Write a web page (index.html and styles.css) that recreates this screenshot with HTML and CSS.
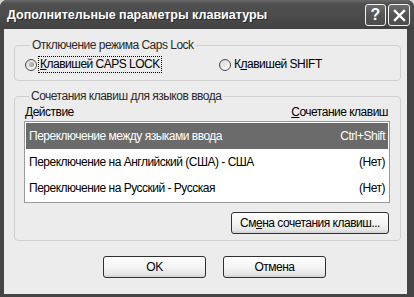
FILE: index.html
```html
<!DOCTYPE html>
<html lang="ru">
<head>
    <meta charset="UTF-8">
    <title>Дополнительные параметры клавиатуры</title>
    <link rel="stylesheet" href="styles.css">
</head>
<body>

    <div class="window">
        <div class="titlebar">
            <span class="title">Дополнительные параметры клавиатуры</span>
            <div class="title-buttons">
                <span class="title-btn help">?</span>
                <span class="title-btn close">
                    <svg width="13" height="13" viewBox="0 0 13 13">
                        <path d="M2 2 L11 11 M11 2 L2 11" stroke="#fff" stroke-width="2.4" stroke-linecap="square"/>
                    </svg>
                </span>
            </div>
        </div>

        <div class="client">
            <fieldset class="group caps-group">
                <legend>Отключение режима Caps Lock</legend>
                <div class="radio-row">
                    <label class="radio-item">
                        <span class="radio checked"></span>
                        <span class="radio-label focused"><u>К</u>лавишей CAPS LOCK</span>
                    </label>
                    <label class="radio-item">
                        <span class="radio"></span>
                        <span class="radio-label">К<u>л</u>авишей SHIFT</span>
                    </label>
                </div>
            </fieldset>

            <fieldset class="group keys-group">
                <legend>Сочетания клавиш для языков ввода</legend>
                <div class="list-header">
                    <span>Действие</span>
                    <span><u>С</u>очетание клавиш</span>
                </div>
                <div class="list">
                    <div class="list-row selected">
                        <span>Переключение между языками ввода</span>
                        <span>Ctrl+Shift</span>
                    </div>
                    <div class="list-row">
                        <span>Переключение на Английский (США) - США</span>
                        <span>(Нет)</span>
                    </div>
                    <div class="list-row">
                        <span>Переключение на Русский - Русская</span>
                        <span>(Нет)</span>
                    </div>
                </div>
                <div class="group-actions">
                    <button class="btn change-btn">См<u>е</u>на сочетания клавиш...</button>
                </div>
            </fieldset>

            <div class="dialog-actions">
                <button class="btn dialog-btn">OK</button>
                <button class="btn dialog-btn">Отмена</button>
            </div>
        </div>
    </div>

</body>
</html>
```

FILE: styles.css
```css
body {
    margin: 0;
    background-color: #d6d6d6;
    font-family: "Liberation Sans", Arial, sans-serif;
    font-size: 12px;
    letter-spacing: -0.5px;
    color: #000;
}
.window {
    width: 414px;
    height: 297px;
    display: flex;
    flex-direction: column;
    background-color: #454545;
    border-radius: 7px 7px 0 0;
    overflow: hidden;
}
.titlebar {
    height: 29px;
    display: flex;
    align-items: center;
    justify-content: space-between;
    padding: 0 4px 0 7px;
    background: linear-gradient(#6a6a6a, #505050 12%, #4a4a4a 60%, #424242);
}
.title {
    color: #fff;
    font-weight: bold;
    font-size: 12.5px;
    letter-spacing: 0;
    margin-top: 1px;
    text-shadow: 1px 1px 0 #2a2a2a;
}
.title-buttons {
    display: flex;
    gap: 2px;
    margin-top: 1px;
}
.title-btn {
    width: 19px;
    height: 20px;
    border: 1px solid #f2f2f2;
    border-radius: 3px;
    background: linear-gradient(#6c6c6c, #555 50%, #4c4c4c);
    display: flex;
    align-items: center;
    justify-content: center;
    color: #fff;
    font-weight: bold;
    font-size: 16px;
    letter-spacing: 0;
}
.title-btn.close {
    width: 20px;
}
.client {
    flex: 1;
    margin: 0 7px 3px 4px;
    padding-top: 9px;
    background-color: #ececec;
}
.group {
    margin: 0 6px 0 10px;
    border: 1px solid #d0d0d0;
    border-radius: 4px;
}
.group legend {
    padding: 0 2px;
    margin-left: 5px;
    line-height: 14px;
    color: #2a2a2a;
}
.caps-group {
    padding: 0 10px 7px 10px;
}
.radio-row {
    display: grid;
    grid-template-columns: 194px auto;
    margin-top: 4px;
    height: 17px;
    align-items: center;
}
.radio-item {
    display: flex;
    align-items: center;
    gap: 1px;
}
.radio {
    width: 10px;
    height: 10px;
    border: 1px solid #4a4a4a;
    border-radius: 50%;
    background: linear-gradient(135deg, #d4d4d4, #f4f4f4 70%, #fff);
    display: flex;
    align-items: center;
    justify-content: center;
}
.radio.checked::after {
    content: "";
    width: 5px;
    height: 5px;
    border-radius: 50%;
    background: radial-gradient(circle at 40% 40%, #c8c8c8, #8a8a8a);
}
.radio-label {
    padding: 1px 1px;
    border: 1px dotted transparent;
    line-height: 13px;
}
.radio-label.focused {
    border-color: #000;
}
.keys-group {
    margin-top: 8px;
    padding: 0 10px 6px 9px;
}
.list-header {
    display: flex;
    justify-content: space-between;
    margin-top: 2px;
    padding: 0 2px 0 1px;
    line-height: 14px;
}
.list {
    margin-top: 2px;
    padding: 1px;
    border: 1px solid #9a9a9a;
    background-color: #fff;
}
.list-row {
    height: 26px;
    display: flex;
    align-items: center;
    justify-content: space-between;
    padding: 0 3px 0 3px;
}
.list-row.selected {
    background-color: #6b6b6b;
    color: #fff;
}
.group-actions {
    display: flex;
    justify-content: flex-end;
    margin-top: 9px;
    padding-right: 1px;
}
.btn {
    font-family: "Liberation Sans", Arial, sans-serif;
    font-size: 12px;
    letter-spacing: -0.5px;
    color: #000;
    height: 22px;
    border: 1px solid #303030;
    border-radius: 3px;
    background: linear-gradient(#ffffff, #f4f4f4 50%, #e6e6e6 85%, #d2d2d2);
    padding: 0;
    white-space: nowrap;
}
.change-btn {
    width: 158px;
}
.dialog-actions {
    display: flex;
    gap: 17px;
    margin-top: 15px;
    padding-left: 99px;
}
.dialog-btn {
    width: 103px;
}
```
